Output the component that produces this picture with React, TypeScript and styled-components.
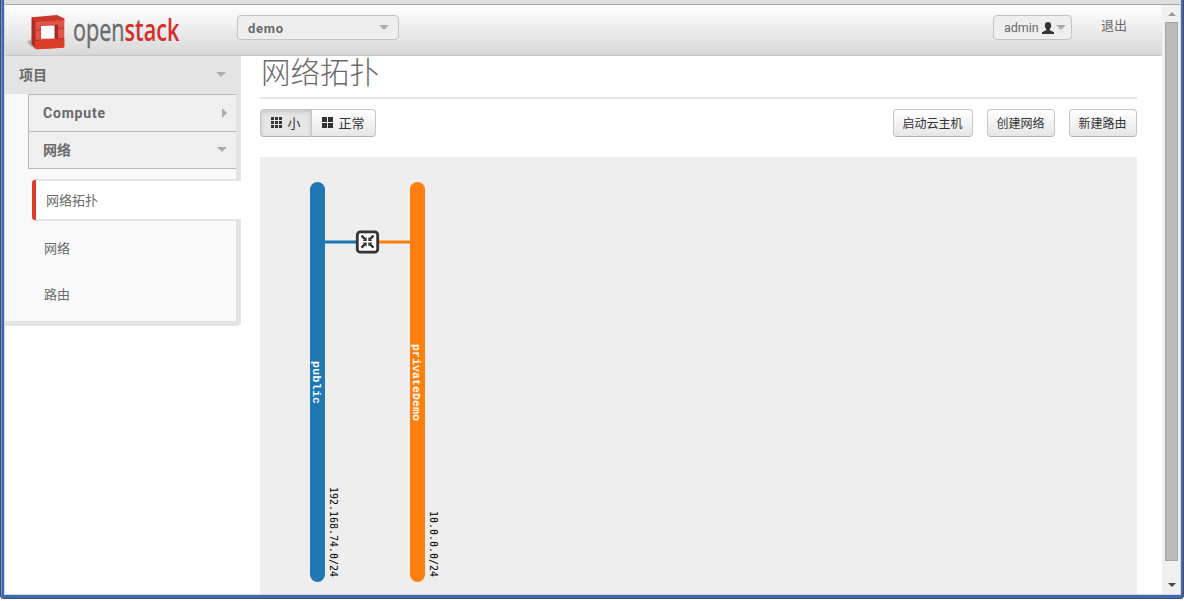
import React from "react";
import styled, { createGlobalStyle, css } from "styled-components";

const Global = createGlobalStyle`
  * { box-sizing: border-box; }
  html, body { margin: 0; padding: 0; background: #fff; overflow: hidden; }
  body { font-family: "Open Sans", "Noto Sans CJK SC", sans-serif; font-size: 13px; color: #6a6a6a; }
  button { font: inherit; }
`;

const Screen = styled.div`
  width: 1184px;
  height: 601px;
  padding-bottom: 2px;
  background: #fff;
`;

const Frame = styled.div`
  height: 599px;
  display: flex;
  flex-direction: column;
  border: 1px solid #4d4f58;
  border-top: 0;
  border-radius: 0 0 4px 4px;
  background: #3a69bd;
  padding: 0 2px 3px 1px;
  box-shadow: inset 1px 0 #6f93d3;
`;

const Inner = styled.div`
  flex: 1;
  min-height: 0;
  margin: 0 0 0 2px;
  display: flex;
  flex-direction: column;
  border: 1px solid #d8d8d2;
  border-top: 0;
  background: #fff;
`;

const TopStrip = styled.div`
  flex: none;
  height: 5px;
  background: #dfdfdf;
  border-bottom: 1px solid #a6a6a6;
`;

const Viewport = styled.div`
  flex: 1;
  min-height: 0;
  display: flex;
`;

const Page = styled.div`
  flex: 1;
  min-width: 0;
  display: flex;
  flex-direction: column;
`;

const Header = styled.header`
  flex: none;
  height: 51px;
  display: flex;
  align-items: flex-start;
  padding-left: 20px;
  border-bottom: 1px solid #c6c6c6;
  background: linear-gradient(#fff, #d8d8d8);
`;

const Logo = styled.svg`
  display: block;
  width: 160px;
  height: 50px;
  margin-right: 52px;
`;

const Picker = styled.button<{ $w: number; $pad: number }>`
  width: ${(p) => p.$w}px;
  height: 25px;
  margin-top: 10px;
  padding: 0 ${(p) => p.$pad}px 0 10px;
  display: flex;
  align-items: center;
  border: 1px solid #c4c4c4;
  border-radius: 4px;
  background: #eee;
  color: #6a6a6a;
  line-height: 22px;
`;

const PickerName = styled.span<{ $bold?: boolean }>`
  flex: 1;
  padding-top: ${(p) => (p.$bold ? 2 : 1)}px;
  text-align: left;
  font-family: Roboto, sans-serif;
  font-weight: ${(p) => (p.$bold ? 700 : 400)};
  font-size: ${(p) => (p.$bold ? 13 : 12.5)}px;
  letter-spacing: ${(p) => (p.$bold ? 0.7 : 0)}px;
`;

const Caret = styled.span<{ $right?: boolean }>`
  flex: none;
  width: 0;
  height: 0;
  ${(p) =>
    p.$right
      ? css`
          border: 5px solid transparent;
          border-left-color: #a9adb0;
          border-right: 0;
        `
      : css`
          border: 5px solid transparent;
          border-top-color: #a9adb0;
          border-bottom: 0;
        `}
`;

const UserIcon = styled.svg`
  flex: none;
  width: 12px;
  height: 12px;
  margin-right: 2px;
`;

const Account = styled.div`
  margin-left: auto;
  display: flex;
  padding-right: 35px;
`;

const SignOut = styled.span`
  margin: 10px 0 0 29px;
  line-height: 20px;
`;

const Body = styled.div`
  flex: 1;
  min-height: 0;
  display: flex;
`;

const Sidebar = styled.nav`
  flex: none;
  width: 236px;
  height: 270px;
  background: #f9f9f9;
  border: solid #e4e4e4;
  border-width: 0 5px 5px 0;
  border-bottom-right-radius: 5px;
`;

const Section = styled.div`
  height: 38px;
  padding: 0 10px 2px 14px;
  display: flex;
  justify-content: space-between;
  align-items: center;
  background: #e4e4e4;
  font-size: 14px;
  font-weight: 700;
`;

const Groups = styled.div`
  margin-left: 23px;
  border: solid #b9b9b9;
  border-width: 1px 0 0 1px;
`;

const Group = styled.div`
  height: 37px;
  padding: 0 9px 1px 14px;
  display: flex;
  justify-content: space-between;
  align-items: center;
  background: #efefef;
  border-bottom: 1px solid #b9b9b9;
  font-family: Roboto, "Noto Sans CJK SC", sans-serif;
  font-size: 14px;
  font-weight: 700;
`;

const Latin = styled.span`
  letter-spacing: 0.8px;
`;

const Han = styled.span`
  padding-bottom: 2px;
`;

const Links = styled.div`
  margin-top: 10px;
  padding-left: 27px;
`;

const Link = styled.div<{ $active?: boolean }>`
  height: 46px;
  padding: 0 0 2px 12px;
  display: flex;
  align-items: center;
  ${(p) =>
    p.$active &&
    css`
      height: 42px;
      margin: 0 -5px 4px 0;
      padding-left: 0;
      background: #fff;
      border: solid #e4e4e4;
      border-width: 2px 0;
      border-radius: 4px 0 0 4px;
      &::before {
        content: "";
        width: 4px;
        height: 40px;
        margin: 0 10px -2px 0;
        flex: none;
        border-radius: 3px 0 0 3px;
        background: #d93e28;
      }
    `}
`;

const Main = styled.main`
  flex: 1;
  min-width: 0;
  padding: 0 25px 0 19px;
  display: flex;
  flex-direction: column;
`;

const Title = styled.h1`
  flex: none;
  height: 43px;
  margin: 0;
  padding-left: 1px;
  border-bottom: 2px solid #e4e4e4;
  font-size: 29.5px;
  line-height: 32px;
  font-weight: 300;
`;

const Toolbar = styled.div`
  flex: none;
  height: 58px;
  padding-top: 10px;
  display: flex;
  align-items: flex-start;
  justify-content: space-between;
`;

const ButtonGroup = styled.div<{ $gap: number }>`
  display: flex;
  gap: ${(p) => p.$gap}px;
`;

const Button = styled.button<{ $w: number; $side?: "left" | "right"; $on?: boolean }>`
  width: ${(p) => p.$w}px;
  height: 28px;
  padding: 0 1px 1px 0;
  display: flex;
  align-items: center;
  justify-content: center;
  gap: 4px;
  white-space: nowrap;
  border: 1px solid #c6c6c6;
  border-bottom-color: #b3b3b3;
  border-radius: ${(p) => (p.$side === "left" ? "4px 0 0 4px" : p.$side === "right" ? "0 4px 4px 0" : "4px")};
  border-left-width: ${(p) => (p.$side === "right" ? 0 : 1)}px;
  background: ${(p) => (p.$on ? "#e6e6e6" : "linear-gradient(#fff, #e6e6e6)")};
  box-shadow: ${(p) => (p.$on ? "inset 0 2px 4px rgba(0,0,0,.15)" : "none")};
  font-size: ${(p) => (p.$side ? 13 : 12)}px;
  color: #333;
`;

const GridIcon = styled.svg`
  width: 12px;
  height: 11px;
  margin-left: 1px;
`;

const Canvas = styled.div`
  flex: 1;
  min-height: 0;
  overflow: hidden;
  background: #eee;
`;

const Scrollbar = styled.div`
  flex: none;
  width: 18px;
  padding: 0 1px 0 2px;
  display: flex;
  flex-direction: column;
  align-items: flex-end;
  background: #f0f0f0;
`;

const Arrow = styled.span<{ $down?: boolean }>`
  flex: none;
  width: 0;
  height: 0;
  border: 4px solid transparent;
  ${(p) =>
    p.$down
      ? css`
          margin: 22px 3px 7px 0;
          border-top-color: #444;
          border-bottom: 0;
        `
      : css`
          margin: 7px 3px 6px 0;
          border-bottom-color: #999;
          border-top: 0;
        `}
`;

const Thumb = styled.div`
  flex: 1;
  width: 13px;
  margin-right: 1px;
  border: 1px solid #a6a6a6;
  background: #bababa;
`;

const squares = (n: number, size: number, step: number) =>
  Array.from({ length: n * n }, (_, i) => (
    <rect key={i} x={(i % n) * step} y={Math.floor(i / n) * step} width={size} height={size} fill="#333" />
  ));

function OpenStackLogo() {
  return (
    <Logo viewBox="0 0 160 50">
      <path d="M2 36l5-1 5 9c-5-1-8-4-10-8z" fill="#b0b0b0" />
      <path d="M6.500 13q0-1 1.500-1l5 4v28l-3-.8L6.500 39z" fill="#ac2d23" />
      <path d="M7 12.200L32 10l7.300 3.500v3L11 18z" fill="#c8382c" />
      <path d="M10.500 17L39.300 15v26.500q0 1-1.500 1.200L12 44.200q-1.500 0-1.500-1.500z" fill="#e4524a" />
      <path d="M10.500 35L39.300 33.500v8q0 1-1.500 1.200L12 44.200q-1.500 0-1.500-1.500z" fill="#db3d27" />
      <path d="M15.500 20.500L33 19.500v14.700H15.500z" fill="#cf4239" />
      <path d="M29 20.500l4-1v14.700l-4-1.200z" fill="#a52a20" />
      <path d="M16 21l13.500-.5V33.500l-13.500 .3z" fill="#fff" />
      <path d="M6.500 23.500l4 1.500h5M6.500 34l4 1.300h5M33 23.500l6-.5M33 34l6-.5" fill="none" stroke="#b0332a" strokeWidth="1" />
      <text transform="translate(48 35.600) scale(.697 1)" fontFamily="Open Sans, sans-serif" fontSize="31" fill="#6b6b6b" stroke="#6b6b6b" strokeWidth=".4">
        open<tspan fontWeight="600" fill="#d32f2a" stroke="none">stack</tspan>
      </text>
    </Logo>
  );
}

const networks = [
  { name: "public", cidr: "192.168.74.0/24", x: 50, color: "#1f77b4", nameY: 204, nameLen: 43, cidrY: 330, cidrLen: 90 },
  { name: "privateDemo", cidr: "10.0.0.0/24", x: 150, color: "#ff7f0e", nameY: 187, nameLen: 77, cidrY: 354, cidrLen: 66 },
];

function Topology() {
  return (
    <svg width="877" height="437" style={{ display: "block" }}>
      {networks.map((n) => (
        <g key={n.name}>
          <rect x={n.x} y={25} width={15} height={400} rx={7.5} fill={n.color} />
          <text transform={`translate(${n.x + 3} ${n.nameY}) rotate(90)`} fontFamily="Liberation Mono, monospace" fontWeight="700" fontSize="11.5" fill="#fff" textLength={n.nameLen}>{n.name}</text>
          <text transform={`translate(${n.x + 20} ${n.cidrY}) rotate(90)`} fontFamily="DejaVu Sans Mono, monospace" fontSize="10.5" fill="#000" textLength={n.cidrLen} lengthAdjust="spacingAndGlyphs">{n.cidr}</text>
        </g>
      ))}
      <path d="M65 85h35" stroke="#1f77b4" strokeWidth="3" />
      <path d="M115 85h35" stroke="#ff7f0e" strokeWidth="3" />
      <rect x="97.3" y="74.8" width="20.4" height="20.4" rx="3" fill="#fff" stroke="#333" strokeWidth="2.8" />
      <g transform="translate(107.5 84.700)">
        {[0, 90, 180, 270].map((a) => (
          <g key={a} transform={`rotate(${a})`}>
            <path d="M-6-6L-2.500-2.500" stroke="#333" strokeWidth="2.400" />
            <path d="M-.8-.8h-4l4-4z" fill="#333" />
          </g>
        ))}
      </g>
    </svg>
  );
}

export default function App() {
  return (
    <Screen>
      <Global />
      <Frame>
        <Inner>
          <TopStrip />
          <Viewport>
            <Page>
              <Header>
                <OpenStackLogo />
                <Picker $w={162} $pad={9}>
                  <PickerName $bold>demo</PickerName>
                  <Caret />
                </Picker>
                <Account>
                  <Picker $w={79} $pad={5}>
                    <PickerName>admin</PickerName>
                    <UserIcon viewBox="0 0 12 12">
                      <path d="M6 0c2 0 3.200 1.300 3.200 3.400C9.200 5 8.600 6 7.800 6.800v1.500L12 10.200V12H0v-1.800l4.200-1.900V6.800C3.400 6 2.800 5 2.800 3.400 2.800 1.300 4 0 6 0z" fill="#333" />
                    </UserIcon>
                    <Caret />
                  </Picker>
                  <SignOut>退出</SignOut>
                </Account>
              </Header>
              <Body>
                <Sidebar>
                  <Section>项目<Caret /></Section>
                  <Groups>
                    <Group><Latin>Compute</Latin><Caret $right /></Group>
                    <Group><Han>网络</Han><Caret /></Group>
                  </Groups>
                  <Links>
                    <Link $active>网络拓扑</Link>
                    <Link>网络</Link>
                    <Link>路由</Link>
                  </Links>
                </Sidebar>
                <Main>
                  <Title>网络拓扑</Title>
                  <Toolbar>
                    <ButtonGroup $gap={0}>
                      <Button $w={52} $side="left" $on>
                        <GridIcon>{squares(3, 3, 4)}</GridIcon>小
                      </Button>
                      <Button $w={64} $side="right">
                        <GridIcon>{squares(2, 5, 6)}</GridIcon>正常
                      </Button>
                    </ButtonGroup>
                    <ButtonGroup $gap={14}>
                      <Button $w={80}>启动云主机</Button>
                      <Button $w={68}>创建网络</Button>
                      <Button $w={68}>新建路由</Button>
                    </ButtonGroup>
                  </Toolbar>
                  <Canvas>
                    <Topology />
                  </Canvas>
                </Main>
              </Body>
            </Page>
            <Scrollbar>
              <Arrow />
              <Thumb />
              <Arrow $down />
            </Scrollbar>
          </Viewport>
        </Inner>
      </Frame>
    </Screen>
  );
}
